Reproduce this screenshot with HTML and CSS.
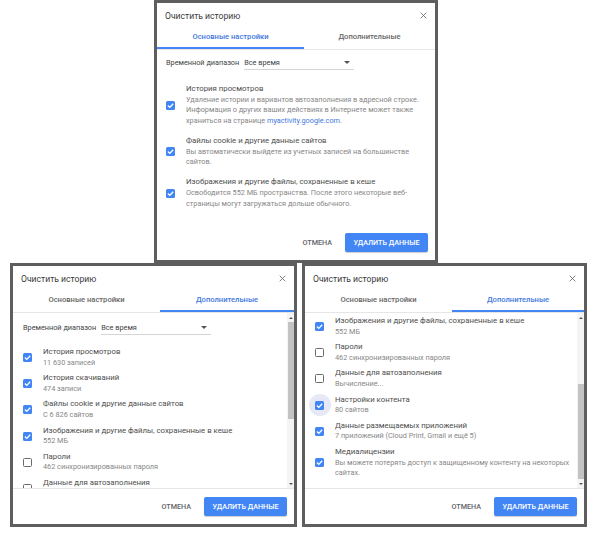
FILE: index.html
```html
<!DOCTYPE html>
<html lang="ru">
<head>
    <meta charset="UTF-8">
    <title>Очистить историю</title>
    <link rel="stylesheet" href="styles.css">
</head>
<body>

<div class="page">
    <div class="top-row">
        <section class="dialog dialog-basic">
            <header class="dlg-head">
                <span class="dlg-title">Очистить историю</span>
                <svg class="close" viewBox="0 0 10 10"><path d="M1 1L9 9M9 1L1 9"/></svg>
            </header>
            <nav class="tabs">
                <div class="tab active">Основные настройки</div>
                <div class="tab">Дополнительные</div>
            </nav>
            <div class="basic-body">
                <div class="range">
                    <span class="range-label">Временной диапазон</span>
                    <span class="select">Все время<i class="caret"></i></span>
                </div>
                <div class="item item-basic">
                    <span class="cb on"><svg viewBox="0 0 10 10"><path d="M2.1 5.1L4.2 7.1L8 3.1"/></svg></span>
                    <div class="item-text">
                        <div class="item-title">История просмотров</div>
                        <div class="item-desc">Удаление истории и вариантов автозаполнения в адресной строке. Информация о других ваших действиях в Интернете может также храниться на странице <span class="link">myactivity.google.com</span>.</div>
                    </div>
                </div>
                <div class="item item-basic">
                    <span class="cb on"><svg viewBox="0 0 10 10"><path d="M2.1 5.1L4.2 7.1L8 3.1"/></svg></span>
                    <div class="item-text">
                        <div class="item-title">Файлы cookie и другие данные сайтов</div>
                        <div class="item-desc">Вы автоматически выйдете из учетных записей на большинстве сайтов.</div>
                    </div>
                </div>
                <div class="item item-basic">
                    <span class="cb on"><svg viewBox="0 0 10 10"><path d="M2.1 5.1L4.2 7.1L8 3.1"/></svg></span>
                    <div class="item-text">
                        <div class="item-title">Изображения и другие файлы, сохраненные в кеше</div>
                        <div class="item-desc">Освободится 552 МБ пространства. После этого некоторые веб-страницы могут загружаться дольше обычного.</div>
                    </div>
                </div>
            </div>
            <footer class="actions">
                <span class="btn-flat">ОТМЕНА</span>
                <span class="btn-primary">УДАЛИТЬ ДАННЫЕ</span>
            </footer>
        </section>
    </div>

    <div class="bottom-row">
        <section class="dialog dialog-left">
            <header class="dlg-head">
                <span class="dlg-title">Очистить историю</span>
                <svg class="close" viewBox="0 0 10 10"><path d="M1 1L9 9M9 1L1 9"/></svg>
            </header>
            <nav class="tabs">
                <div class="tab">Основные настройки</div>
                <div class="tab active">Дополнительные</div>
            </nav>
            <div class="scroll-area">
                <div class="list list-start">
                    <div class="range">
                        <span class="range-label">Временной диапазон</span>
                        <span class="select">Все время<i class="caret"></i></span>
                    </div>
                    <div class="item">
                        <span class="cb on"><svg viewBox="0 0 10 10"><path d="M2.1 5.1L4.2 7.1L8 3.1"/></svg></span>
                        <div class="item-text">
                            <div class="item-title">История просмотров</div>
                            <div class="item-desc">11 630 записей</div>
                        </div>
                    </div>
                    <div class="item">
                        <span class="cb on"><svg viewBox="0 0 10 10"><path d="M2.1 5.1L4.2 7.1L8 3.1"/></svg></span>
                        <div class="item-text">
                            <div class="item-title">История скачиваний</div>
                            <div class="item-desc">474 записи</div>
                        </div>
                    </div>
                    <div class="item">
                        <span class="cb on"><svg viewBox="0 0 10 10"><path d="M2.1 5.1L4.2 7.1L8 3.1"/></svg></span>
                        <div class="item-text">
                            <div class="item-title">Файлы cookie и другие данные сайтов</div>
                            <div class="item-desc">С 6 826 сайтов</div>
                        </div>
                    </div>
                    <div class="item">
                        <span class="cb on"><svg viewBox="0 0 10 10"><path d="M2.1 5.1L4.2 7.1L8 3.1"/></svg></span>
                        <div class="item-text">
                            <div class="item-title">Изображения и другие файлы, сохраненные в кеше</div>
                            <div class="item-desc">552 МБ</div>
                        </div>
                    </div>
                    <div class="item">
                        <span class="cb"></span>
                        <div class="item-text">
                            <div class="item-title">Пароли</div>
                            <div class="item-desc">462 синхронизированных пароля</div>
                        </div>
                    </div>
                    <div class="item">
                        <span class="cb"></span>
                        <div class="item-text">
                            <div class="item-title">Данные для автозаполнения</div>
                            <div class="item-desc">Вычисление...</div>
                        </div>
                    </div>
                </div>
                <div class="scrollbar">
                    <i class="arrow up"></i>
                    <div class="track"><div class="thumb thumb-top"></div></div>
                    <i class="arrow down"></i>
                </div>
            </div>
            <footer class="actions">
                <span class="btn-flat">ОТМЕНА</span>
                <span class="btn-primary">УДАЛИТЬ ДАННЫЕ</span>
            </footer>
        </section>

        <section class="dialog dialog-right">
            <header class="dlg-head">
                <span class="dlg-title">Очистить историю</span>
                <svg class="close" viewBox="0 0 10 10"><path d="M1 1L9 9M9 1L1 9"/></svg>
            </header>
            <nav class="tabs">
                <div class="tab">Основные настройки</div>
                <div class="tab active">Дополнительные</div>
            </nav>
            <div class="scroll-area">
                <div class="list list-end">
                    <div class="item">
                        <span class="cb on"><svg viewBox="0 0 10 10"><path d="M2.1 5.1L4.2 7.1L8 3.1"/></svg></span>
                        <div class="item-text">
                            <div class="item-title">Изображения и другие файлы, сохраненные в кеше</div>
                            <div class="item-desc">552 МБ</div>
                        </div>
                    </div>
                    <div class="item">
                        <span class="cb"></span>
                        <div class="item-text">
                            <div class="item-title">Пароли</div>
                            <div class="item-desc">462 синхронизированных пароля</div>
                        </div>
                    </div>
                    <div class="item">
                        <span class="cb"></span>
                        <div class="item-text">
                            <div class="item-title">Данные для автозаполнения</div>
                            <div class="item-desc">Вычисление...</div>
                        </div>
                    </div>
                    <div class="item">
                        <span class="ripple"><span class="cb on"><svg viewBox="0 0 10 10"><path d="M2.1 5.1L4.2 7.1L8 3.1"/></svg></span></span>
                        <div class="item-text">
                            <div class="item-title">Настройки контента</div>
                            <div class="item-desc">80 сайтов</div>
                        </div>
                    </div>
                    <div class="item">
                        <span class="cb on"><svg viewBox="0 0 10 10"><path d="M2.1 5.1L4.2 7.1L8 3.1"/></svg></span>
                        <div class="item-text">
                            <div class="item-title">Данные размещаемых приложений</div>
                            <div class="item-desc">7 приложений (Cloud Print, Gmail и ещё 5)</div>
                        </div>
                    </div>
                    <div class="item">
                        <span class="cb on"><svg viewBox="0 0 10 10"><path d="M2.1 5.1L4.2 7.1L8 3.1"/></svg></span>
                        <div class="item-text">
                            <div class="item-title">Медиалицензии</div>
                            <div class="item-desc">Вы можете потерять доступ к защищенному контенту на некоторых сайтах.</div>
                        </div>
                    </div>
                </div>
                <div class="scrollbar">
                    <i class="arrow up"></i>
                    <div class="track"><div class="thumb thumb-low"></div></div>
                    <i class="arrow down"></i>
                </div>
            </div>
            <footer class="actions">
                <span class="btn-flat">ОТМЕНА</span>
                <span class="btn-primary">УДАЛИТЬ ДАННЫЕ</span>
            </footer>
        </section>
    </div>
</div>

</body>
</html>
```

FILE: styles.css
```css
body {
    margin: 0;
    background-color: #fff;
    font-family: Roboto, "Liberation Sans", sans-serif;
    color: #333;
}
.page {
    width: 600px;
    height: 534px;
}
.top-row {
    padding-left: 154px;
}
.bottom-row {
    display: flex;
    gap: 5px;
    padding-left: 10px;
}
.dialog {
    box-sizing: border-box;
    display: flex;
    flex-direction: column;
    background-color: #fff;
    border: 3px solid #5e5e5e;
}
.dialog-basic {
    width: 284px;
    height: 263px;
}
.dialog-left {
    width: 287px;
    height: 264px;
}
.dialog-right {
    width: 285px;
    height: 264px;
}
.dlg-head {
    height: 23px;
    display: flex;
    align-items: center;
    justify-content: space-between;
    padding: 1px 8px 0;
}
.dlg-title {
    font-size: 8.6px;
    color: #3a3a3a;
}
.close {
    width: 7px;
    height: 7px;
    stroke: #6a6a6a;
    stroke-width: 1.2;
    fill: none;
}
.tabs {
    display: grid;
    grid-template-columns: 147px 1fr;
    border-bottom: 1px solid #e6e6e6;
}
.tab {
    box-sizing: border-box;
    height: 22px;
    line-height: 20px;
    text-align: center;
    font-size: 7.6px;
    font-weight: 500;
    color: #666;
    border-bottom: 2px solid transparent;
}
.tab.active {
    color: #3f78e0;
    border-bottom-color: #4285f4;
}
.basic-body {
    padding: 6px 8px 0 9px;
}
.range {
    display: flex;
    align-items: flex-end;
    gap: 5px;
    font-size: 7.3px;
    color: #444;
}
.range-label {
    line-height: 14px;
}
.select {
    position: relative;
    width: 110px;
    line-height: 13px;
    border-bottom: 1px solid #d5d5d5;
}
.caret {
    position: absolute;
    right: 4px;
    top: 5px;
    border-left: 3px solid transparent;
    border-right: 3px solid transparent;
    border-top: 3px solid #555;
}
.item {
    display: grid;
    grid-template-columns: 9px 1fr;
    column-gap: 11px;
    align-items: center;
    margin-bottom: 5px;
}
.item-basic {
    margin-bottom: 9.6px;
}
.basic-body .range {
    margin-bottom: 14px;
}
.item-title {
    font-size: 7.8px;
    line-height: 10.6px;
    color: #4d4d4d;
}
.item-desc {
    font-size: 7.3px;
    line-height: 10.6px;
    color: #878787;
}
.link {
    color: #3f78e0;
}
.cb {
    box-sizing: border-box;
    width: 9px;
    height: 9px;
    border: 1.5px solid #6a6a6a;
    border-radius: 1.5px;
}
.cb.on {
    border: none;
    background-color: #4285f4;
}
.cb svg {
    display: block;
    width: 9px;
    height: 9px;
    fill: none;
    stroke: #fff;
    stroke-width: 1.5;
}
.ripple {
    width: 22px;
    height: 22px;
    margin: -6.5px;
    border-radius: 50%;
    background-color: #e6e8f5;
    display: flex;
    align-items: center;
    justify-content: center;
}
.actions {
    margin-top: auto;
    display: flex;
    justify-content: flex-end;
    align-items: center;
    gap: 13px;
    padding: 8px 7px 8px 0;
}
.btn-flat {
    font-size: 7.2px;
    font-weight: 500;
    color: #5f6368;
}
.btn-primary {
    width: 83px;
    height: 19px;
    display: flex;
    align-items: center;
    justify-content: center;
    border-radius: 2px;
    background-color: #4285f4;
    color: #fff;
    font-size: 7.2px;
    font-weight: 500;
    box-shadow: 0 1px 1px rgba(0, 0, 0, 0.2);
}
.scroll-area {
    flex: 1;
    display: grid;
    grid-template-columns: 1fr 7px;
    overflow: hidden;
    border-bottom: 1px solid #e6e6e6;
}
.list {
    overflow: hidden;
    padding-left: 10px;
}
.list-start {
    padding-top: 8px;
}
.list-start .range {
    margin-bottom: 12px;
}
.list-end {
    padding-top: 3px;
}
.scrollbar {
    display: flex;
    flex-direction: column;
    background-color: #f4f4f4;
}
.arrow {
    height: 9px;
    display: flex;
    align-items: center;
    justify-content: center;
}
.arrow::before {
    content: "";
    border-left: 2px solid transparent;
    border-right: 2px solid transparent;
}
.arrow.up::before {
    border-bottom: 2.5px solid #555;
}
.arrow.down::before {
    border-top: 2.5px solid #555;
}
.track {
    flex: 1;
    padding: 0 0.5px;
}
.thumb {
    height: 97px;
    background-color: #c3c3c3;
}
.thumb-top {
    margin-top: 0;
}
.thumb-low {
    margin-top: 62px;
    height: 95px;
}
```
